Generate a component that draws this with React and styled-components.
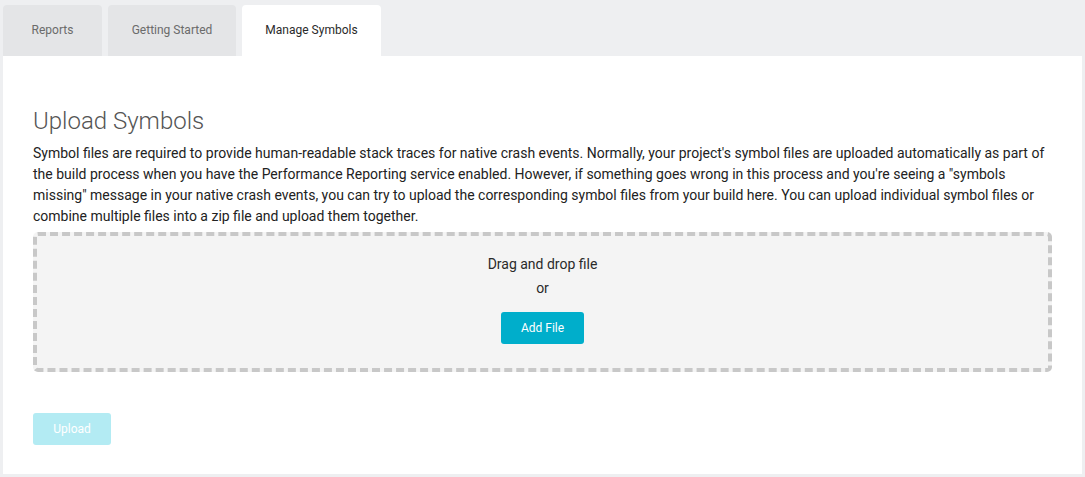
import React from "react";
import styled, { createGlobalStyle } from "styled-components";

const GlobalStyle = createGlobalStyle`
  html, body {
    margin: 0;
    background: #eeeff1;
    font-family: Roboto, "Liberation Sans", Arial, sans-serif;
  }
`;

const Page = styled.div`
  padding: 5px 3px 3px 3px;
`;

const TabBar = styled.div`
  display: flex;
  gap: 6px;
  height: 51px;
`;

const Tab = styled.div`
  display: flex;
  align-items: center;
  justify-content: center;
  width: ${(p) => p.width}px;
  padding-bottom: 2px;
  box-sizing: border-box;
  border-radius: 4px 4px 0 0;
  background: ${(p) => (p.active ? "#ffffff" : "#e4e5e7")};
  color: ${(p) => (p.active ? "#2a2a2a" : "#6b6b6b")};
  font-size: 12px;
`;

const Panel = styled.div`
  background: #ffffff;
  padding: 50px 30px 29px 30px;
  height: 418px;
  box-sizing: border-box;
`;

const Title = styled.h2`
  margin: 0 0 7px 0;
  font-family: "Roboto Light", Roboto, "Liberation Sans", sans-serif;
  font-size: 24px;
  font-weight: 300;
  color: #555555;
  line-height: 30px;
`;

const Text = styled.p`
  margin: 0 0 5px 0;
  font-size: 14px;
  line-height: 21px;
  color: #222222;
`;

const DropZone = styled.div`
  height: 140px;
  box-sizing: border-box;
  border: 4px dashed #c8c8c8;
  border-radius: 5px;
  background: #f4f4f4;
  display: flex;
  flex-direction: column;
  align-items: center;
  padding-top: 16px;
  color: #2a2a2a;
  font-size: 14px;
`;

const DropLine = styled.div`
  line-height: 24px;
`;

const Button = styled.button`
  height: 32px;
  width: ${(p) => p.width}px;
  border: none;
  border-radius: 3px;
  background: ${(p) => (p.disabled ? "#b3ebf3" : "#00aecb")};
  color: #ffffff;
  font-family: inherit;
  font-size: 12px;
  padding: 0;
  cursor: ${(p) => (p.disabled ? "default" : "pointer")};
`;

const AddWrap = styled.div`
  margin-top: 12px;
`;

const Footer = styled.div`
  margin-top: 41px;
`;

export default function App() {
  return (
    <Page>
      <GlobalStyle />
      <TabBar>
        <Tab width={99}>Reports</Tab>
        <Tab width={128}>Getting Started</Tab>
        <Tab width={139} active>Manage Symbols</Tab>
      </TabBar>
      <Panel>
        <Title>Upload Symbols</Title>
        <Text>
          Symbol files are required to provide human-readable stack traces for native crash events. Normally, your project's symbol files are uploaded automatically as part of the build process when you have the Performance Reporting service enabled. However, if something goes wrong in this process and you're seeing a "symbols missing" message in your native crash events, you can try to upload the corresponding symbol files from your build here. You can upload individual symbol files or combine multiple files into a zip file and upload them together.
        </Text>
        <DropZone>
          <DropLine>Drag and drop file</DropLine>
          <DropLine>or</DropLine>
          <AddWrap>
            <Button width={83}>Add File</Button>
          </AddWrap>
        </DropZone>
        <Footer>
          <Button width={78} disabled>Upload</Button>
        </Footer>
      </Panel>
    </Page>
  );
}
